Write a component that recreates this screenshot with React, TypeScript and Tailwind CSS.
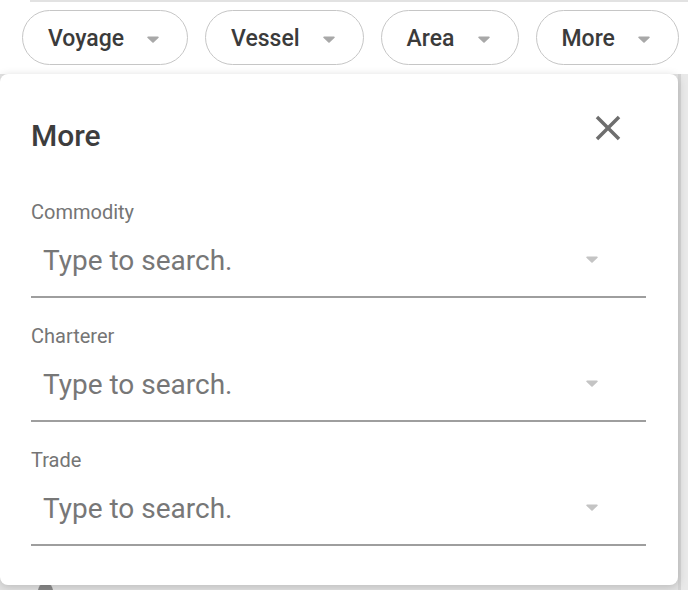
import React from 'react'

const filters = ['Voyage', 'Vessel', 'Area', 'More']

const fields = ['Commodity', 'Charterer', 'Trade']

function Caret({ className = '' }: { className?: string }) {
  return (
    <svg width="12" height="7" viewBox="0 0 12 7" className={className}>
      <path d="M1 0.5h10a0.8 0.8 0 0 1 0.6 1.3L6.6 6.4a0.8 0.8 0 0 1-1.2 0L0.4 1.8A0.8 0.8 0 0 1 1 0.5z" fill="currentColor" />
    </svg>
  )
}

function Chip({ label }: { label: string }) {
  return (
    <button className="h-[55px] flex items-center gap-[23px] pl-[25px] pr-[28px] rounded-full border-[1.5px] border-[#c6c6c6] bg-white text-[23px] leading-none font-medium text-[#3b3b3b]">
      <span className="mt-[2px]">{label}</span>
      <Caret className="text-[#a8a8a8] mt-[3px]" />
    </button>
  )
}

export default function App() {
  return (
    <div
      className="relative w-[688px] h-[590px] overflow-hidden bg-white"
      style={{ fontFamily: 'Roboto, "Liberation Sans", sans-serif' }}
    >
      {/* page behind the popover */}
      <div className="flex flex-col h-full">
        <div className="h-[2px] ml-[30px] bg-[#e2e2e2]" />
        <div className="flex gap-[17px] pl-[22px] pt-[8px] pb-[9px]">
          {filters.map((f) => (
            <Chip key={f} label={f} />
          ))}
        </div>
        <div className="flex-1 bg-[#e3e3e3] flex justify-end">
          <div className="w-[10px] h-full border-l-[3px] border-[#d6d6d6] bg-[#e9e9e9]" />
        </div>
      </div>
      <div className="absolute left-[38px] top-[583px] w-[15px] h-[15px] rounded-full bg-[#8a8a8a]" />

      {/* More popover */}
      <div className="absolute left-0 top-[74px] w-[678px] h-[511px] rounded-lg bg-white shadow-[0_2px_10px_rgba(0,0,0,0.18)] pt-[32px] pl-[31px] pr-[32px]">
        <div className="flex items-start justify-between h-[44px] pr-[17px]">
          <h2 className="mt-[15px] text-[30px] leading-[30px] font-medium text-[#3d3d3d]">More</h2>
          <svg width="42" height="42" viewBox="0 0 24 24" className="mt-[1px] text-[#6e6e6e]">
            <path
              fill="currentColor"
              d="M19 6.41L17.59 5 12 10.59 6.41 5 5 6.41 10.59 12 5 17.59 6.41 19 12 13.41 17.59 19 19 17.59 13.41 12z"
            />
          </svg>
        </div>
        <div className="mt-[52px] flex flex-col gap-[28px]">
          {fields.map((f) => (
            <div key={f}>
              <div className="text-[20px] leading-[20px] text-[#757575]">{f}</div>
              <div className="h-[76px] flex items-center justify-between pl-[12px] pr-[48px] border-b-2 border-[#9e9e9e]">
                <span className="mt-[3px] text-[28px] leading-[28px] text-[#777777]">Type to search.</span>
                <Caret className="text-[#c4c4c4]" />
              </div>
            </div>
          ))}
        </div>
      </div>
    </div>
  )
}
